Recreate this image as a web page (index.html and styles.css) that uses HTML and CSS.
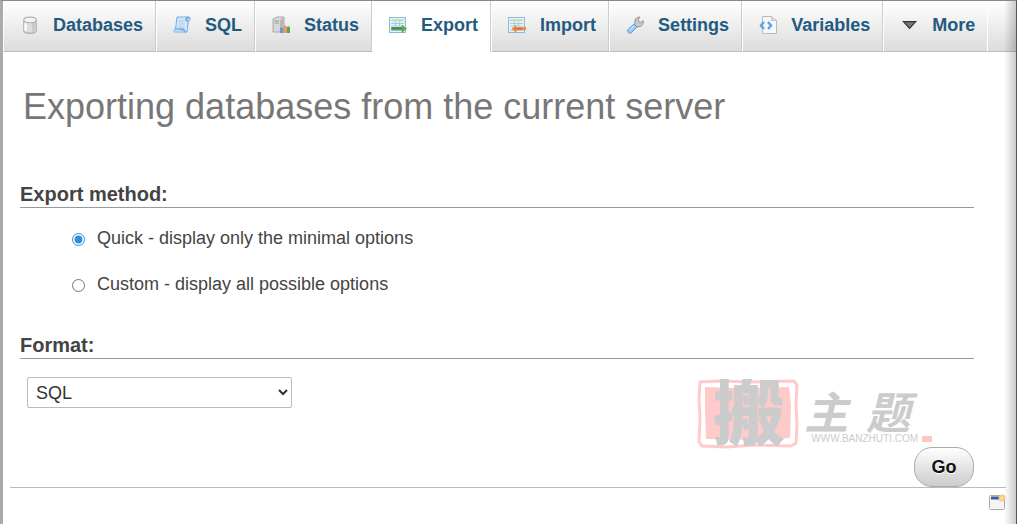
FILE: index.html
```html
<!DOCTYPE html>
<html lang="en">
<head>
    <meta charset="UTF-8">
    <meta name="viewport" content="width=device-width, initial-scale=1.0">
    <title>Export</title>
    <link rel="stylesheet" href="styles.css">
</head>
<body>
    <!-- Top menu -->
    <nav class="topmenu">
        <a class="tab" href="#databases">
            <svg class="icon" viewBox="0 0 16 16">
                <path d="M2.500 4v9c0 3 11 3 11 0V4" fill="#ddd" stroke="#aaa"/>
                <path d="M4 6v7" stroke="#fff" stroke-width="2"/>
                <path d="M11 6v8" stroke="#c4c4c4" stroke-width="2"/>
                <ellipse cx="8" cy="3.500" rx="5.500" ry="2.500" fill="#f4f4f4" stroke="#b4b4b4"/>
            </svg>
            Databases
        </a>
        <a class="tab" href="#sql">
            <svg class="icon" viewBox="0 0 18 18">
                <path d="M4 1h12c2 0 1.500 4-.500 4L14 16H2c-2 0-1.500-3 .500-3z" fill="#cfe6fa" stroke="#78aede"/>
                <path d="M15 5h-2V3c0-2 3-2 3-.500M2 13h9c0 2 1 3 2.500 3" fill="#9bc8ef" stroke="#5f97cf"/>
                <path d="M6 5h5M6 8h5M5 11h6" stroke="#a5cdef"/>
            </svg>
            SQL
        </a>
        <a class="tab" href="#status">
            <svg class="icon" viewBox="0 0 18 18">
                <path d="M1 3l4-2h7v13l-3 2H1z" fill="#d8d8d8" stroke="#aaa"/>
                <path d="M8 4l4-3v13l-4 2z" fill="#b9b9b9"/>
                <path d="M2.500 5H7M2.500 7H7" stroke="#999"/>
                <path d="M8 17v-5l2-1 1 1v5z" fill="#4f9fe0"/>
                <path d="M11 17v-6l2-2 2 2v6z" fill="#ee995a"/>
                <path d="M15 17v-6l2-1 1 2v5z" fill="#58a65b"/>
            </svg>
            Status
        </a>
        <a class="tab active" href="#export">
            <svg class="icon" viewBox="0 0 17 17">
                <path d="M.500 1.500h15v14H.500z" fill="#eaf5ff" stroke="#8eb8dd"/>
                <path d="M2 3h12v2H2z" fill="#bfe0a4"/>
                <path d="M2 7h12M2 9.500h12M6 5v5M10 5v5" stroke="#a3c9ea"/>
                <path d="M2 13.500h12" stroke="#8abbe3"/>
                <path d="M2 10.500h10V8l5 4-5 4v-2.500H2z" fill="#5bab55"/>
                <path d="M3 11.500h9" stroke="#526753"/>
            </svg>
            Export
        </a>
        <a class="tab" href="#import">
            <svg class="icon" viewBox="0 0 17 17">
                <path d="M.500 1.500h15v14H.500z" fill="#eaf5ff" stroke="#8eb8dd"/>
                <path d="M2 3h12v2H2z" fill="#bfe0a4"/>
                <path d="M2 7h12M2 9.500h12M6 5v5M10 5v5M2 13.500h12" stroke="#a3c9ea"/>
                <path d="M17 10.500H8V8l-5 4 5 4v-2.500h9z" fill="#ef9149"/>
                <path d="M6 12h7" stroke="#c76b2d"/>
            </svg>
            Import
        </a>
        <a class="tab" href="#settings">
            <svg class="icon" viewBox="0 0 18 18">
                <path d="M9 8c-1-4 1-7 5-7l-2 3 1 2 2 .500 2-2c1 4-2 7-5 6l-2 1-2-2z" fill="#c8c8c8" stroke="#949494"/>
                <path d="M8 8l3 3-6 6c-2 1-4-1-3.500-3z" fill="#9dcaf3" stroke="#6999d0"/>
                <path d="M4 14l4-4" stroke="#d6edff"/>
            </svg>
            Settings
        </a>
        <a class="tab" href="#variables">
            <svg class="icon" viewBox="0 0 18 18">
                <path d="M3.500.500h9l5 4v13h-14z" fill="#f7f7f7" stroke="#bbb"/>
                <path d="M12.500.500v4h5" fill="#ddd" stroke="#c4c4c4"/>
                <path d="M5 6L2 9.500 5 13M9 6l3 3.500L9 13" fill="none" stroke="#59a7e7" stroke-width="2.500"/>
            </svg>
            Variables
        </a>
        <a class="tab" href="#more">
            <svg class="icon" viewBox="0 0 16 16">
                <path d="M3 5h11l-5.500 6z" fill="#777" stroke="#333"/>
            </svg>
            More
        </a>
    </nav>

    <main class="page">
        <h1>Exporting databases from the current server</h1>

        <form class="export-form">
            <fieldset class="export-method">
                <legend>Export method:</legend>
                <ul class="method-list">
                    <li>
                        <input type="radio" name="method" id="quick" checked>
                        <label for="quick">Quick - display only the minimal options</label>
                    </li>
                    <li>
                        <input type="radio" name="method" id="custom">
                        <label for="custom">Custom - display all possible options</label>
                    </li>
                </ul>
            </fieldset>

            <div class="format">
                <h2><label for="format">Format:</label></h2>
                <select id="format">
                    <option>SQL</option>
                    <option>CSV</option>
                    <option>JSON</option>
                    <option>XML</option>
                </select>
            </div>

            <div class="submit-row">
                <button type="submit">Go</button>
            </div>
        </form>

        <!-- Watermark -->
        <div class="watermark" lang="zh">
            <svg class="seal" viewBox="0 0 106 70">
                <path d="M4 3l20-1 31 1 43-1 3 4-1 20 1 20-1 18-5 3-35-1-30 2-24-1-3-4 1-24-1-19z" fill="none" stroke="#ffcaca" stroke-width="3"/>
                <path d="M9 8l30 1 54-1 2 18-1 33-34 2-50-1-1-30z" fill="#ffcaca"/>
                <text class="seal-text" x="17" y="60">搬</text>
            </svg>
            <div class="brand">
                <span class="brand-name">主题</span>
                <span class="brand-url">WWW.BANZHUTI.COM</span>
            </div>
        </div>
    </main>

    <footer class="footer">
        <a href="#new-window" aria-label="Open new window">
            <svg class="window-icon" viewBox="0 0 17 17">
                <rect x=".500" y="1.500" width="15" height="14" rx="1" fill="#f5f5f5" stroke="#aaa"/>
                <path d="M2 4h10" stroke="#2e62a5" stroke-width="3"/>
                <circle cx="13" cy="4" r="3.500" fill="#fcc780"/>
                <circle cx="13" cy="4" r="1.500" fill="#ffe2ad"/>
            </svg>
        </a>
    </footer>
</body>
</html>
```
FILE: styles.css
```css
* {
    margin: 0;
    padding: 0;
    box-sizing: border-box;
}

body {
    position: relative;
    display: flex;
    flex-direction: column;
    min-height: 100vh;
    font-family: "Liberation Sans", Arial, sans-serif;
    font-size: 18px;
    color: #444;
    background-color: #fff;
    border-top: 1px solid #888;
    border-left: 3px solid #aaa;
    border-right: 1px solid #555;
}

/* Shade along the right edge */
body::after {
    content: "";
    position: absolute;
    top: 0;
    right: 0;
    bottom: 0;
    width: 12px;
    background: linear-gradient(to right, rgba(0, 0, 0, 0), rgba(0, 0, 0, 0.2));
    pointer-events: none;
}

/* Top menu */
.topmenu {
    display: flex;
    height: 51px;
    background: linear-gradient(#fff, #dcdcdc);
    border-bottom: 1px solid #bbb;
}

.tab {
    display: flex;
    align-items: center;
    height: 51px;
    padding: 0 12px 2px 16px;
    border-left: 1px solid #fff;
    border-right: 1px solid #ccc;
    border-bottom: 1px solid #bbb;
    color: #235a81;
    font-weight: bold;
    text-decoration: none;
    white-space: nowrap;
}

.tab:first-child {
    padding-left: 17px;
}

.tab:last-child {
    border-right-color: #fff;
}

.tab.active {
    background-color: #fff;
    border-bottom-color: #fff;
}

.icon {
    width: 18px;
    height: 18px;
    margin-right: 14px;
    fill: none;
}

/* Page */
.page {
    position: relative;
    margin-left: 7px;
    margin-right: 10px;
    padding: 34px 32px 0 10px;
    border-bottom: 1px solid #bbb;
}

h1 {
    padding-left: 3px;
    font-size: 36px;
    font-weight: normal;
    line-height: 42px;
    color: #777;
}

fieldset {
    border: none;
}

legend,
h2 {
    width: 100%;
    font-size: 20px;
    font-weight: bold;
    line-height: 26px;
    border-bottom: 1px solid #999;
}

.export-method {
    margin-top: 53px;
}

.method-list {
    padding: 18px 0 0 52px;
    list-style: none;
}

.method-list li {
    display: flex;
    align-items: center;
    height: 24px;
    margin-bottom: 22px;
}

.method-list input {
    width: 13px;
    height: 13px;
    margin: 3px 12px 0 0;
    accent-color: #308cd5;
}

.format {
    margin-top: 14px;
}

select {
    width: 265px;
    height: 31px;
    margin: 18px 0 0 7px;
    padding: 0 4px;
    font-family: inherit;
    font-size: 18px;
    color: #333;
    background-color: #fff;
    border: 1px solid #bbb;
    border-radius: 2px;
}

.submit-row {
    display: flex;
    justify-content: flex-end;
    margin-top: 39px;
}

button {
    width: 60px;
    height: 40px;
    font-family: inherit;
    font-size: 18px;
    font-weight: bold;
    color: #111;
    text-shadow: 0 1px 0 #fff;
    background: linear-gradient(#fff, #ccc);
    border: 1px solid #aaa;
    border-radius: 18px;
    cursor: pointer;
}

/* Watermark */
.watermark {
    position: absolute;
    right: 74px;
    bottom: 38px;
    display: flex;
    color: #ccc;
    pointer-events: none;
}

.seal {
    width: 106px;
    height: 70px;
}

.seal-text {
    font-family: "Noto Sans CJK SC", sans-serif;
    font-size: 72px;
    font-weight: 900;
    fill: #ccc;
}

.brand {
    display: flex;
    flex-direction: column;
    padding: 8px 0 0 2px;
}

.brand-name {
    display: flex;
    font-family: "Noto Sans CJK SC", sans-serif;
    font-size: 44px;
    font-weight: bold;
    font-style: italic;
    line-height: 46px;
    letter-spacing: 18px;
}

.brand-url {
    display: flex;
    align-items: center;
    padding-left: 7px;
    font-size: 10px;
    line-height: 12px;
}

.brand-url::after {
    content: "";
    width: 10px;
    height: 6px;
    margin-left: 4px;
    background-color: #ffc4c4;
}

/* Footer */
.footer {
    display: flex;
    justify-content: flex-end;
    padding: 6px 10px 0 0;
}

.window-icon {
    display: block;
    width: 17px;
    height: 17px;
}
```
